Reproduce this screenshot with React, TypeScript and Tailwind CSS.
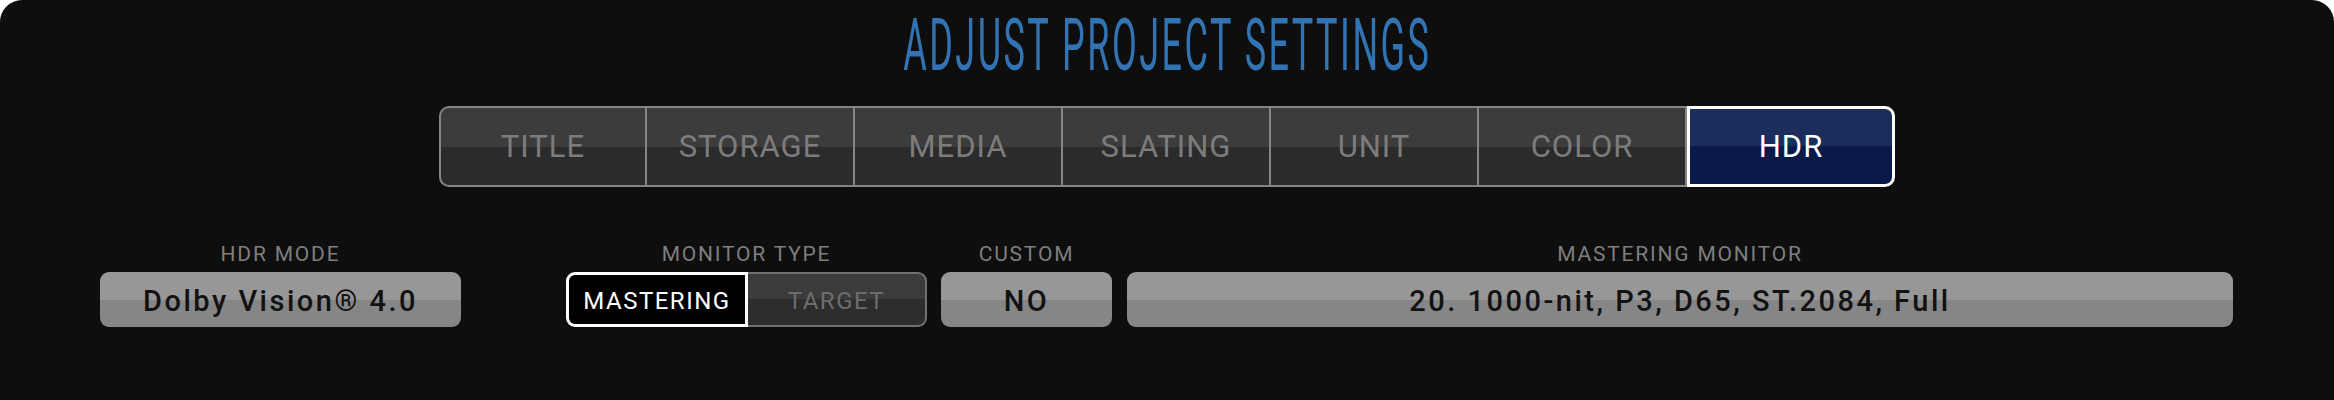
import React, { useState } from 'react';

const tabs = ['TITLE', 'STORAGE', 'MEDIA', 'SLATING', 'UNIT', 'COLOR', 'HDR'];

const font = { fontFamily: 'Roboto, "Noto Sans", sans-serif' };

const Label: React.FC<{ text: string }> = ({ text }) => (
    <div className="h-[26px] text-[21px] leading-[26px] tracking-[1.8px] text-[#7e7e7e]">{text}</div>
);

const ValueBox: React.FC<{ value: string; className?: string }> = ({ value, className }) => (
    <div
        className={
            'h-[55px] w-full flex items-center justify-center pt-[5px] rounded-[9px] bg-[linear-gradient(to_bottom,#979797_50%,#868686_50%)] text-[29px] font-medium tracking-[2.5px] text-[#121212] ' +
            (className ?? '')
        }
    >
        {value}
    </div>
);

export default function App() {
    const [active, setActive] = useState('HDR');
    const [monitorType, setMonitorType] = useState('MASTERING');

    return (
        <div className="w-[2334px] h-[400px] bg-white" style={font}>
            <div className="h-full rounded-t-[22px] bg-[#0e0e0e] flex flex-col items-center">
                <h1 className="mt-[2px] h-[88px] flex items-center text-[72px] leading-none font-normal text-[#3273b3]">
                    <span className="inline-block scale-x-[0.5] tracking-[5px] whitespace-nowrap">ADJUST PROJECT SETTINGS</span>
                </h1>

                <div className="mt-[16px] flex h-[81px]">
                    {tabs.map((t, i) => {
                        const on = t === active;
                        return (
                            <button
                                key={t}
                                onClick={() => setActive(t)}
                                className={
                                    on
                                        ? 'w-[208px] h-full pt-[2px] border-[3px] border-white rounded-r-[10px] bg-[linear-gradient(to_bottom,#1b2d5a_50%,#0a1a48_50%)] text-white text-[31px] tracking-[1px]'
                                        : i === 0
                                        ? 'w-[208px] h-full pt-[2px] border-2 border-[#858585] rounded-l-[10px] bg-[linear-gradient(to_bottom,#3c3c3c_50%,#2b2b2b_50%)] text-[#7c7c7c] text-[31px] tracking-[1px]'
                                        : 'w-[208px] h-full pt-[2px] border-y-2 border-r-2 border-[#858585] bg-[linear-gradient(to_bottom,#3c3c3c_50%,#2b2b2b_50%)] text-[#7c7c7c] text-[31px] tracking-[1px]'
                                }
                            >
                                {t}
                            </button>
                        );
                    })}
                </div>

                <div className="mt-[54px] w-full px-[100px] flex items-start">
                    <div className="w-[361px] flex flex-col items-center gap-[5px]">
                        <Label text="HDR MODE" />
                        <ValueBox value="Dolby Vision® 4.0" />
                    </div>

                    <div className="ml-[105px] w-[361px] flex flex-col items-center gap-[5px]">
                        <Label text="MONITOR TYPE" />
                        <div className="flex w-full h-[55px]">
                            <button
                                onClick={() => setMonitorType('MASTERING')}
                                className={
                                    monitorType === 'MASTERING'
                                        ? 'w-[182px] h-full pt-[3px] bg-black border-[3px] border-white rounded-l-[9px] text-white text-[24px] tracking-[1.5px]'
                                        : 'w-[182px] h-full pt-[3px] border-y-2 border-l-2 border-[#707070] rounded-l-[9px] bg-[linear-gradient(to_bottom,#3b3b3b_50%,#2d2d2d_50%)] text-[#6c6c6c] text-[24px] tracking-[1.5px]'
                                }
                            >
                                MASTERING
                            </button>
                            <button
                                onClick={() => setMonitorType('TARGET')}
                                className={
                                    monitorType === 'TARGET'
                                        ? 'flex-1 h-full pt-[3px] bg-black border-[3px] border-white rounded-r-[9px] text-white text-[24px] tracking-[1.5px]'
                                        : 'flex-1 h-full pt-[3px] border-y-2 border-r-2 border-[#707070] rounded-r-[9px] bg-[linear-gradient(to_bottom,#3b3b3b_50%,#2d2d2d_50%)] text-[#6c6c6c] text-[24px] tracking-[1.5px]'
                                }
                            >
                                TARGET
                            </button>
                        </div>
                    </div>

                    <div className="ml-[14px] w-[171px] flex flex-col items-center gap-[5px]">
                        <Label text="CUSTOM" />
                        <ValueBox value="NO" />
                    </div>

                    <div className="ml-[15px] w-[1106px] flex flex-col items-center gap-[5px]">
                        <Label text="MASTERING MONITOR" />
                        <ValueBox value="20. 1000-nit, P3, D65, ST.2084, Full" />
                    </div>
                </div>
            </div>
        </div>
    );
}
